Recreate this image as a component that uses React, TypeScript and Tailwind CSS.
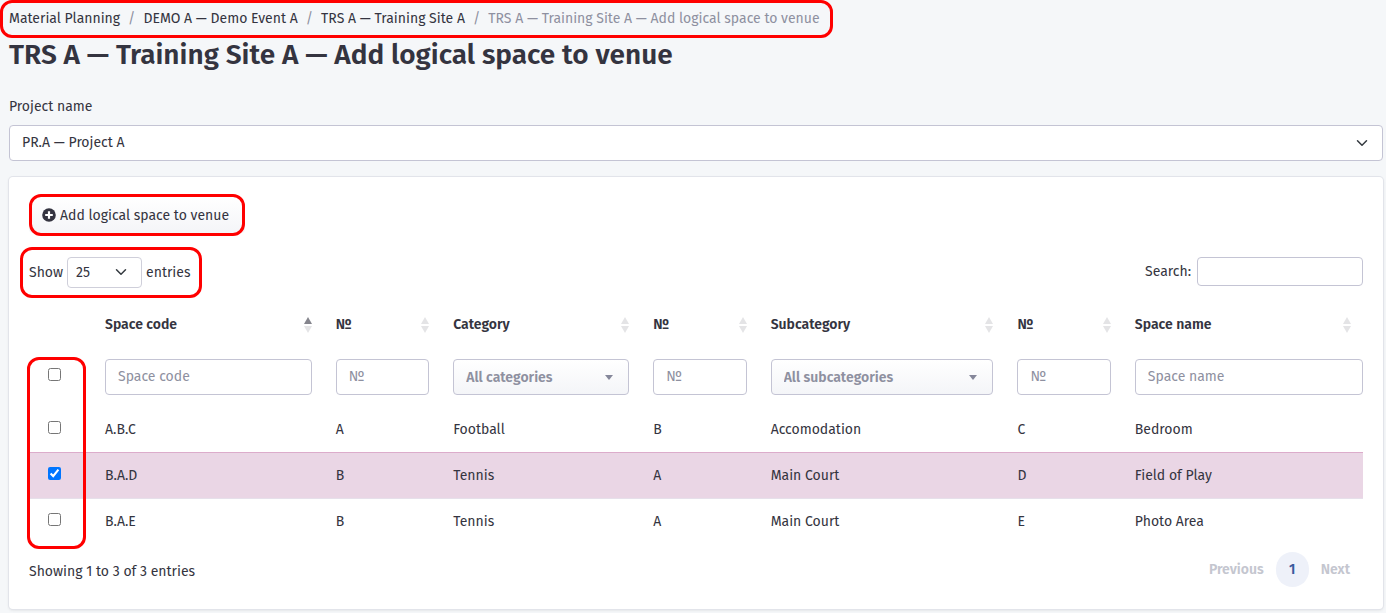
import { useState } from "react";

const rows = [
  { code: "A.B.C", a: "A", category: "Football", b: "B", subcategory: "Accomodation", c: "C", name: "Bedroom" },
  { code: "B.A.D", a: "B", category: "Tennis", b: "A", subcategory: "Main Court", c: "D", name: "Field of Play" },
  { code: "B.A.E", a: "B", category: "Tennis", b: "A", subcategory: "Main Court", c: "E", name: "Photo Area" },
];

const headings = ["Space code", "№", "Category", "№", "Subcategory", "№", "Space name"];

const field =
  "block h-9 w-full rounded border border-[#c4c4d4] bg-white px-3 placeholder:text-[#8e90a0] placeholder:opacity-100";

function Highlight({ className }: { className: string }) {
  return (
    <div
      aria-hidden="true"
      className={`pointer-events-none absolute z-10 rounded-xl border-3 border-[#ff0000] ${className}`}
    />
  );
}

function Chevron({ className }: { className: string }) {
  return (
    <svg
      viewBox="0 0 16 16"
      className={`pointer-events-none absolute size-3 ${className}`}
      fill="none"
      stroke="#343a40"
      strokeWidth="2"
      strokeLinecap="round"
      strokeLinejoin="round"
    >
      <path d="m2 5 6 6 6-6" />
    </svg>
  );
}

function SortArrows({ active }: { active: boolean }) {
  return (
    <svg viewBox="0 0 8 16" className="h-4 w-2 shrink-0">
      <path d="M4 0 8 7H0Z" fill={active ? "#85858d" : "#e4e4e6"} />
      <path d="M4 16 8 9H0Z" fill="#e4e4e6" />
    </svg>
  );
}

function FilterSelect({ label }: { label: string }) {
  return (
    <div className="relative">
      <select
        aria-label={label}
        className="block h-9 w-full appearance-none rounded border border-[#c4c4d4] bg-linear-to-b from-white to-[#f4f5f8] px-3 pt-0.5 font-semibold text-[#8e90a0]"
      >
        <option>{label}</option>
      </select>
      <svg viewBox="0 0 8 5" className="pointer-events-none absolute top-4 right-4 h-[5px] w-2">
        <path d="M0 0H8L4 5Z" fill="#85879a" />
      </svg>
    </div>
  );
}

export default function App() {
  const [checked, setChecked] = useState([false, true, false]);
  const all = checked.every(Boolean);

  return (
    <div className="min-h-screen bg-[#f5f7f9] pr-[3px] pb-1 pl-[9px] font-['Fira_Sans','Roboto',sans-serif] text-sm text-[#343440]">
      <nav aria-label="Breadcrumb" className="relative -ml-[9px] w-fit pt-[9px] pr-[13px] pb-[9px] pl-[9px]">
        <ol className="flex h-5 items-center gap-2">
          <li><a href="#planning">Material Planning</a></li>
          <li className="text-[#8e90a0]">/</li>
          <li><a href="#event">DEMO A — Demo Event A</a></li>
          <li className="text-[#8e90a0]">/</li>
          <li><a href="#site">TRS A — Training Site A</a></li>
          <li className="text-[#8e90a0]">/</li>
          <li className="text-[#8e90a0]" aria-current="page">TRS A — Training Site A — Add logical space to venue</li>
        </ol>
        <Highlight className="inset-0" />
      </nav>

      <h1 className="pt-px text-[28px] leading-8 font-semibold">TRS A — Training Site A — Add logical space to venue</h1>

      <label htmlFor="project" className="mt-[25px] block leading-[22px]">Project name</label>
      <div className="relative mt-[7px]">
        <select id="project" className={`${field} appearance-none`}>
          <option>PR.A — Project A</option>
        </select>
        <Chevron className="top-3 right-[15px]" />
      </div>

      <main className="mt-4 rounded bg-white px-5 pt-5 pb-[22px] shadow-[0_0_0_1px_#e2e4ea,0_1px_3px_rgba(0,0,0,0.12)]">
        <div className="relative w-fit">
          <button
            type="button"
            className="flex h-9 items-center gap-1 rounded bg-linear-to-b from-white to-[#f4f5f8] pr-4 pl-[13px]"
          >
            <svg viewBox="0 0 14 14" className="size-3.5">
              <circle cx="7" cy="7" r="6.8" fill="#343440" />
              <path d="M7 3.2v7.6M3.2 7h7.6" stroke="#fff" strokeWidth="2.2" />
            </svg>
            <span className="pt-0.5">Add logical space to venue</span>
          </button>
          <Highlight className="-inset-y-[3px] inset-x-0" />
        </div>

        <div className="mt-6 flex h-[31px] items-start justify-between">
          <div className="relative flex items-center gap-1">
            <label htmlFor="length">Show</label>
            <div className="relative">
              <select
                id="length"
                className="block h-[31px] w-[75px] appearance-none rounded border border-[#cfcfda] bg-white px-2"
              >
                <option>25</option>
              </select>
              <Chevron className="top-[9px] right-[15px]" />
            </div>
            <label htmlFor="length">entries</label>
            <Highlight className="-top-[10px] -right-3 -bottom-[10px] -left-[9px]" />
          </div>
          <div className="flex items-center gap-1.5">
            <label htmlFor="search">Search:</label>
            <input id="search" type="search" className="h-[29px] w-[166px] rounded border border-[#c4c4d4] bg-white px-2" />
          </div>
        </div>

        <div className="relative mt-[13px]">
          <table className="w-full table-fixed border-collapse text-left">
            <colgroup>
              <col className="w-16" />
              <col className="w-[17.3%]" />
              <col className="w-[8.8%]" />
              <col className="w-[15%]" />
              <col className="w-[8.8%]" />
              <col className="w-[18.5%]" />
              <col className="w-[8.8%]" />
              <col />
            </colgroup>
            <thead>
              <tr className="h-[46px]">
                <td />
                {headings.map((heading, i) => (
                  <th
                    key={i}
                    scope="col"
                    aria-sort={i === 0 ? "ascending" : undefined}
                    className="px-3 pt-0.5 font-semibold"
                  >
                    <div className="flex items-center justify-between">
                      {heading}
                      <SortArrows active={i === 0} />
                    </div>
                  </th>
                ))}
              </tr>
              <tr className="h-[59px]">
                <td className="pb-[5px] pl-[19px]">
                  <input
                    type="checkbox"
                    aria-label="Select all"
                    className="block"
                    checked={all}
                    onChange={() => setChecked(checked.map(() => !all))}
                  />
                </td>
                <td className="px-3"><input aria-label="Space code" placeholder="Space code" className={field} /></td>
                <td className="px-3"><input aria-label="Space code №" placeholder="№" className={field} /></td>
                <td className="px-3"><FilterSelect label="All categories" /></td>
                <td className="px-3"><input aria-label="Category №" placeholder="№" className={field} /></td>
                <td className="px-3"><FilterSelect label="All subcategories" /></td>
                <td className="px-3"><input aria-label="Subcategory №" placeholder="№" className={field} /></td>
                <td className="pl-3"><input aria-label="Space name" placeholder="Space name" className={field} /></td>
              </tr>
            </thead>
            <tbody>
              {rows.map((row, i) => (
                <tr
                  key={row.code}
                  className={checked[i] ? "h-[46px] border-t border-b border-t-[#dcaccb] border-b-[#e6e0ea] bg-[#ead6e5]" : "h-[46px]"}
                >
                  <td className="pb-[3px] pl-[19px]">
                    <input
                      type="checkbox"
                      aria-label={`Select ${row.code}`}
                      className="block"
                      checked={checked[i]}
                      onChange={() => setChecked(checked.map((v, j) => (j === i ? !v : v)))}
                    />
                  </td>
                  <td className="px-3 pt-0.5">{row.code}</td>
                  <td className="px-3 pt-0.5">{row.a}</td>
                  <td className="px-3 pt-0.5">{row.category}</td>
                  <td className="px-3 pt-0.5">{row.b}</td>
                  <td className="px-3 pt-0.5">{row.subcategory}</td>
                  <td className="px-3 pt-0.5">{row.c}</td>
                  <td className="px-3 pt-0.5">{row.name}</td>
                </tr>
              ))}
            </tbody>
          </table>
          <Highlight className="top-14 -bottom-[5px] -left-0.5 w-[59px]" />
        </div>

        <div className="mt-2 flex items-center justify-between">
          <p className="pt-1">Showing 1 to 3 of 3 entries</p>
          <nav aria-label="Pagination" className="flex h-[35px] items-center gap-3 pr-[13px] font-semibold">
            <button type="button" disabled className="text-[#c4c6cf]">Previous</button>
            <button type="button" aria-current="page" className="h-[35px] w-[33px] rounded-full bg-[#eef1f9] text-[#3a5a9c]">1</button>
            <button type="button" disabled className="text-[#c4c6cf]">Next</button>
          </nav>
        </div>
      </main>
    </div>
  );
}
